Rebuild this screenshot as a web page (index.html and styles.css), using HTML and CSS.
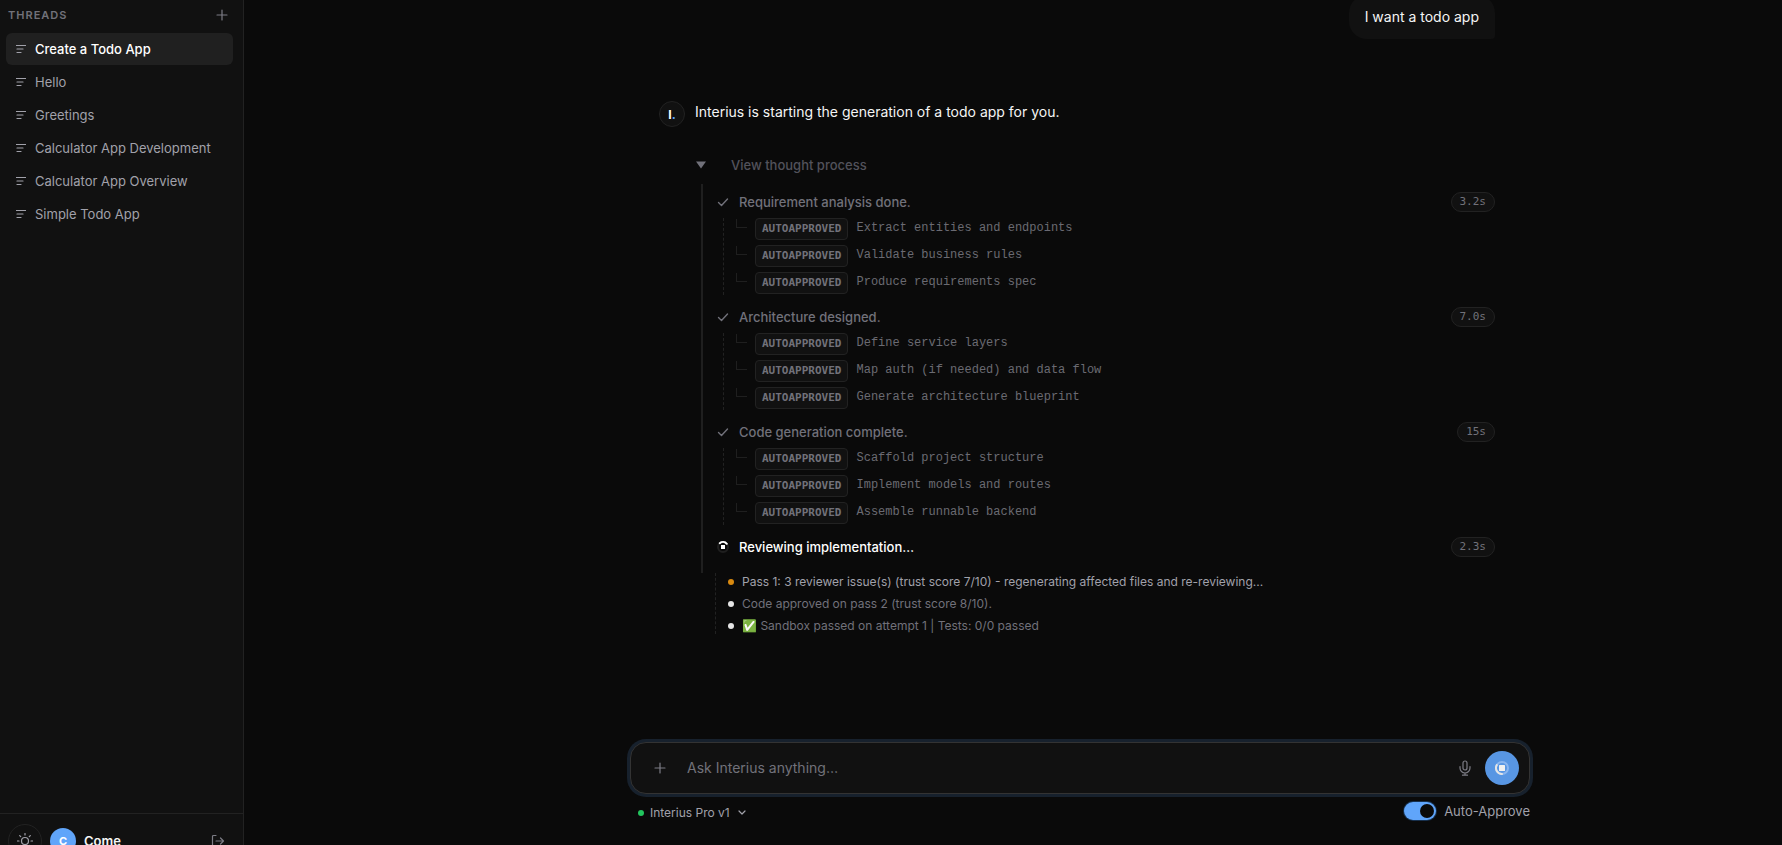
FILE: index.html
```html
<!DOCTYPE html>
<html lang="en">
<head>
    <meta charset="UTF-8">
    <meta name="viewport" content="width=device-width, initial-scale=1.0">
    <title>Interius</title>
    <link rel="stylesheet" href="styles.css">
</head>
<body>
    <svg width="0" height="0" class="sprite" aria-hidden="true">
        <symbol id="i-lines" viewBox="0 0 10 10"><path d="M0.5 1.5h9M1 5h6M1 8.5h4"/></symbol>
        <symbol id="i-plus" viewBox="0 0 12 12"><path d="M6 1v10M1 6h10"/></symbol>
        <symbol id="i-check" viewBox="0 0 12 12"><path d="M1.5 6.5l3 3 6-6.5"/></symbol>
    </svg>

    <div class="app">
        <aside class="sidebar">
            <div class="threads-head">
                <h2>THREADS</h2>
                <button class="icon-btn" aria-label="New thread"><svg class="icon-12"><use href="#i-plus"/></svg></button>
            </div>
            <nav class="threads">
                <a href="#" class="thread active"><svg class="icon-10"><use href="#i-lines"/></svg>Create a Todo App</a>
                <a href="#" class="thread"><svg class="icon-10"><use href="#i-lines"/></svg>Hello</a>
                <a href="#" class="thread"><svg class="icon-10"><use href="#i-lines"/></svg>Greetings</a>
                <a href="#" class="thread"><svg class="icon-10"><use href="#i-lines"/></svg>Calculator App Development</a>
                <a href="#" class="thread"><svg class="icon-10"><use href="#i-lines"/></svg>Calculator App Overview</a>
                <a href="#" class="thread"><svg class="icon-10"><use href="#i-lines"/></svg>Simple Todo App</a>
            </nav>
            <div class="user-bar">
                <button class="theme-btn" aria-label="Toggle theme">
                    <svg width="16" height="16" viewBox="0 0 16 16"><circle cx="8" cy="8" r="3.5"/><path d="M8 0.5v1.5M8 14v1.5M0.5 8H2M14 8h1.5M2.7 2.7l1 1M12.3 12.3l1 1M2.7 13.3l1-1M12.3 3.7l1-1"/></svg>
                </button>
                <span class="user-avatar">C</span>
                <span class="user-name">Come</span>
                <button class="icon-btn" aria-label="Log out">
                    <svg width="14" height="14" viewBox="0 0 14 14"><path d="M5 1.5H2.5a1 1 0 0 0-1 1v9a1 1 0 0 0 1 1H5M5 7h7.5M9.5 4l3 3-3 3"/></svg>
                </button>
            </div>
        </aside>

        <main class="main">
            <section class="chat">
                <div class="bubble">I want a todo app</div>

                <article class="reply">
                    <div class="bot-avatar">I<span>.</span></div>
                    <div class="reply-body">
                        <p class="reply-text">Interius is starting the generation of a todo app for you.</p>

                        <button class="thought-toggle" aria-expanded="true">
                            <svg width="10" height="8" viewBox="0 0 10 8"><path d="M0 0.5h10L5 7.5z"/></svg>
                            View thought process
                        </button>

                        <div class="steps">
                            <div class="step">
                                <div class="step-head"><svg class="icon-12"><use href="#i-check"/></svg><h3>Requirement analysis done.</h3><span class="time">3.2s</span></div>
                                <ul class="tasks">
                                    <li><i class="elbow"></i><span class="badge">AUTOAPPROVED</span><span class="task">Extract entities and endpoints</span></li>
                                    <li><i class="elbow"></i><span class="badge">AUTOAPPROVED</span><span class="task">Validate business rules</span></li>
                                    <li><i class="elbow"></i><span class="badge">AUTOAPPROVED</span><span class="task">Produce requirements spec</span></li>
                                </ul>
                            </div>
                            <div class="step">
                                <div class="step-head"><svg class="icon-12"><use href="#i-check"/></svg><h3>Architecture designed.</h3><span class="time">7.0s</span></div>
                                <ul class="tasks">
                                    <li><i class="elbow"></i><span class="badge">AUTOAPPROVED</span><span class="task">Define service layers</span></li>
                                    <li><i class="elbow"></i><span class="badge">AUTOAPPROVED</span><span class="task">Map auth (if needed) and data flow</span></li>
                                    <li><i class="elbow"></i><span class="badge">AUTOAPPROVED</span><span class="task">Generate architecture blueprint</span></li>
                                </ul>
                            </div>
                            <div class="step">
                                <div class="step-head"><svg class="icon-12"><use href="#i-check"/></svg><h3>Code generation complete.</h3><span class="time">15s</span></div>
                                <ul class="tasks">
                                    <li><i class="elbow"></i><span class="badge">AUTOAPPROVED</span><span class="task">Scaffold project structure</span></li>
                                    <li><i class="elbow"></i><span class="badge">AUTOAPPROVED</span><span class="task">Implement models and routes</span></li>
                                    <li><i class="elbow"></i><span class="badge">AUTOAPPROVED</span><span class="task">Assemble runnable backend</span></li>
                                </ul>
                            </div>
                            <div class="step running">
                                <div class="step-head">
                                    <svg class="icon-12" viewBox="0 0 12 12"><circle cx="6" cy="6" r="5" stroke="#1f1f1f" stroke-width="2"/><path d="M2.8 2.2A5 5 0 0 1 9.8 2.8" stroke-width="2"/><rect x="4" y="4" width="4" height="4" fill="#fff" stroke="none"/></svg>
                                    <h3>Reviewing implementation…</h3><span class="time">2.3s</span>
                                </div>
                            </div>
                        </div>

                        <ul class="reviews">
                            <li class="warn">Pass 1: 3 reviewer issue(s) (trust score 7/10) - regenerating affected files and re-reviewing...</li>
                            <li>Code approved on pass 2 (trust score 8/10).</li>
                            <li>✅ Sandbox passed on attempt 1 | Tests: 0/0 passed</li>
                        </ul>
                    </div>
                </article>
            </section>

            <form class="composer">
                <div class="input-box">
                    <button type="button" class="icon-btn" aria-label="Attach"><svg class="icon-12"><use href="#i-plus"/></svg></button>
                    <input type="text" placeholder="Ask Interius anything…" aria-label="Message">
                    <button type="button" class="icon-btn" aria-label="Dictate">
                        <svg width="12" height="16" viewBox="0 0 12 16"><rect x="4" y="1" width="4" height="9" rx="2"/><path d="M1 6.5V8a5 5 0 0 0 10 0V6.5M6 13v2M3.5 15.2h5"/></svg>
                    </button>
                    <button type="button" class="stop-btn" aria-label="Stop">
                        <svg width="14" height="14" viewBox="0 0 14 14"><circle cx="7" cy="7" r="6" stroke="#8ab6f0"/><path d="M7 13A6 6 0 0 1 1.8 4" stroke="#e5e5e5"/><rect x="4" y="4" width="6" height="6" rx="0.5" fill="#f0f0f0" stroke="none"/></svg>
                    </button>
                </div>
                <div class="options">
                    <button type="button" class="model"><span class="dot"></span>Interius Pro v1
                        <svg width="8" height="6" viewBox="0 0 8 6"><path d="M1 1l3 3 3-3"/></svg>
                    </button>
                    <label class="approve"><input type="checkbox" checked>Auto-Approve</label>
                </div>
            </form>
        </main>
    </div>
</body>
</html>
```
FILE: styles.css
```css
* { box-sizing: border-box; }
body { margin: 0; background: #0a0a0a; color: #a1a1aa; font-family: Inter, "Liberation Sans", sans-serif; font-size: 13px; overflow: hidden; }
h2, h3, p, ul { margin: 0; padding: 0; }
ul { list-style: none; }
button { font: inherit; color: inherit; background: none; border: none; padding: 0; cursor: pointer; }
svg { fill: none; stroke: currentColor; stroke-width: 1.2; stroke-linecap: round; stroke-linejoin: round; flex: none; display: block; }
.sprite { position: absolute; }
.icon-10 { width: 10px; height: 10px; }
.icon-12 { width: 12px; height: 12px; }
.icon-btn { color: #7c7c85; }

.app { display: flex; height: 100vh; }

/* sidebar */
.sidebar { width: 244px; height: calc(100vh + 23px); flex: none; display: flex; flex-direction: column; background: #111; border-right: 1px solid #222; }
.threads-head { display: flex; align-items: center; justify-content: space-between; height: 33px; padding: 0 15px 3px 8px; }
.threads-head h2 { font-size: 11px; font-weight: 600; letter-spacing: 1px; color: #71717a; }
.threads { flex: 1; display: flex; flex-direction: column; gap: 1px; padding: 0 10px 0 6px; }
.thread { display: flex; align-items: center; gap: 9px; height: 32px; padding: 0 10px 1px; border-radius: 6px; color: #a1a1aa; text-decoration: none; }
.thread.active { background: #202020; color: #fff; font-weight: 500; }
.thread svg { color: #a1a1aa; }
.user-bar { display: flex; align-items: center; gap: 8px; padding: 10px 18px 10px 8px; border-top: 1px solid #222; }
.theme-btn { width: 34px; height: 34px; display: grid; place-items: center; border: 1px solid #222; border-radius: 50%; }
.user-avatar { width: 26px; height: 26px; display: grid; place-items: center; border-radius: 50%; background: #60a5fa; color: #fff; font-size: 11px; font-weight: 700; }
.user-name { flex: 1; color: #f5f5f5; font-weight: 600; }

/* chat */
.main { flex: 1; min-width: 0; display: flex; flex-direction: column; align-items: center; padding-left: 134px; }
.chat { flex: 1; min-height: 0; width: 100%; max-width: 900px; display: flex; flex-direction: column; justify-content: flex-end; padding: 0 35px 108px 29px; overflow: hidden; }
.bubble { align-self: flex-end; flex: none; padding: 10px 16px; margin-bottom: 60px; background: #111; color: #f5f5f5; border-radius: 18px 18px 4px 18px; font-size: 14px; line-height: 24px; }
.reply { display: flex; gap: 10px; flex: none; }
.bot-avatar { width: 26px; height: 26px; margin-top: 2px; display: flex; align-items: center; justify-content: center; flex: none; border: 1px solid #222; border-radius: 50%; background: #111; color: #fff; font-size: 12px; font-weight: 700; }
.bot-avatar span { color: #60a5fa; }
.reply-body { flex: 1; min-width: 0; }
.reply-text { color: #f5f5f5; font-size: 14px; line-height: 26px; }
.thought-toggle { display: flex; align-items: center; gap: 25px; height: 20px; margin: 30px 0 9px 1px; color: #52525b; font-weight: 500; }
.thought-toggle svg { fill: #71717a; stroke: none; }

.steps { display: flex; flex-direction: column; gap: 12px; margin-left: 6px; padding: 8px 0 16px 14px; border-left: 2px solid #1f1f1f; }
.step-head { display: flex; align-items: center; height: 20px; color: #71717a; }
.step-head h3 { flex: 1; margin-left: 10px; font-size: 13px; font-weight: 500; }
.running .step-head svg, .running .step-head h3 { color: #fff; }
.step-head svg { stroke-width: 1.4; }
.time { padding: 0 8px; border: 1px solid #222; border-radius: 10px; background: #111; font: 11px/18px "DejaVu Sans Mono", monospace; }
.tasks { display: flex; flex-direction: column; gap: 5px; margin: 6px 0 0 6px; padding: 0 0 1px 12px; border-left: 1px dashed #222; }
.tasks li { display: flex; height: 22px; color: #71717a; }
.elbow { width: 11px; height: 9px; margin: 1px 8px 0 0; border: solid #1f1f1f; border-width: 0 0 1px 1px; }
.badge { padding: 0 6px; border: 1px solid #222; border-radius: 4px; background: #111; font: bold 11px/20px "DejaVu Sans Mono", monospace; }
.task { margin-left: 8px; color: #6a6a72; font: 12px/20px "Liberation Mono", monospace; }

.reviews { display: flex; flex-direction: column; gap: 5px; margin-left: 20px; padding-left: 12px; border-left: 1px dashed #222; font-size: 12px; }
.reviews li { display: flex; align-items: center; gap: 8px; height: 17px; color: #71717a; }
.reviews li::before { content: ""; width: 6px; height: 6px; border-radius: 50%; background: #e5e5e5; }
.reviews .warn { color: #a1a1aa; }
.reviews .warn::before { background: #d98a10; }

/* composer */
.composer { width: 100%; max-width: 900px; height: 103px; flex: none; }
.input-box { display: flex; align-items: center; height: 52px; padding: 0 10px 0 23px; background: #111; border: 1px solid #333; border-radius: 16px; box-shadow: 0 0 0 3px #17212d; }
.input-box input { flex: 1; min-width: 0; margin: 0 21px; padding: 0; background: none; border: none; outline: none; color: #f5f5f5; font: 14px/20px Inter, sans-serif; }
.input-box input::placeholder { color: #71717a; opacity: 1; }
.stop-btn { width: 34px; height: 34px; margin-left: 14px; display: grid; place-items: center; border-radius: 50%; background: #5896e3; }
.stop-btn svg { stroke-width: 2; }
.options { display: flex; align-items: flex-end; justify-content: space-between; padding: 8px 0 0 8px; }
.model { display: flex; align-items: center; gap: 6px; font-size: 12px; }
.model svg { margin-left: 2px; }
.dot { width: 6px; height: 6px; border-radius: 50%; background: #22c55e; }
.approve { display: flex; align-items: center; gap: 8px; cursor: pointer; }
.approve input { appearance: none; width: 32px; height: 18px; margin: 0; padding: 2px; display: flex; justify-content: flex-end; border-radius: 9px; background: #60a5fa; box-shadow: 0 0 0 1px #17304d; cursor: pointer; }
.approve input::before { content: ""; width: 14px; height: 14px; border-radius: 50%; background: #0a0a0a; }
.approve input:not(:checked) { justify-content: flex-start; background: #333; }
```
